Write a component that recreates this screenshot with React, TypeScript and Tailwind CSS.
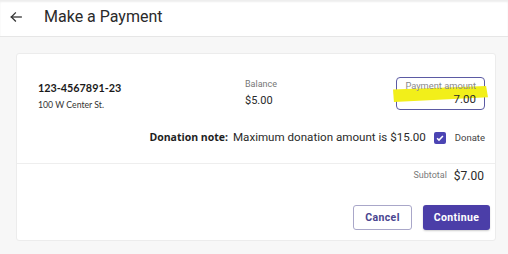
import React from "react";

export default function App() {
  return (
    <div className="w-[508px] h-[254px] overflow-hidden bg-[#f7f7f7] font-['Roboto',sans-serif]">
      <header className="h-[37px] bg-white border-b border-[#e6e6e6] shadow-[inset_0_2px_2px_rgba(0,0,0,0.07)] flex items-center pb-[3px]">
        <svg className="ml-[9px] w-[14px] h-[14px]" viewBox="0 0 24 24" fill="none" stroke="#333" strokeWidth="2.2" strokeLinecap="square">
          <path d="M21 12H4" />
          <path d="M11 5l-7 7 7 7" />
        </svg>
        <h1 className="ml-[21px] text-[16px] text-[#2a2a2a] leading-none">Make a Payment</h1>
      </header>
      <main className="pt-[16px] px-[16px]">
        <div className="w-[480px] h-[188px] bg-white border border-[#ececec] rounded-[3px] flex flex-col">
          <div className="h-[110px] pl-[21px] pr-[10px] pt-[23px] border-b border-[#eeeeee]">
            <div className="flex items-center h-[33px]">
              <div className="w-[207px] pt-[3px]">
                <div className="font-['Lato',sans-serif] font-bold text-[10.8px] text-[#1a1a1a] leading-[14px]">123-4567891-23</div>
                <div className="font-['Lato',sans-serif] text-[8.7px] text-[#333] leading-[11px] mt-[4px]">100 W Center St.</div>
              </div>
              <div className="flex-1 -mt-[1px]">
                <div className="text-[9px] text-[#777] leading-[11px]">Balance</div>
                <div className="text-[11px] text-[#2a2a2a] leading-[14px] mt-[4px]">$5.00</div>
              </div>
              <div className="relative w-[89px] h-[33px] rounded-[4px] border-[1.5px] border-[#5b5aa3] flex flex-col items-end pr-[8px] pt-[2px]">
                <div className="absolute left-[-4px] top-[8px] w-[95px] h-[16px] bg-[#f2ef1a] [clip-path:polygon(0_22%,98%_0,100%_70%,1%_100%)]" />
                <div className="relative text-[9.3px] text-[#8a8a8a] leading-[11px]">Payment amount</div>
                <div className="relative text-[11.5px] text-[#2a2a2a] leading-[13px] mt-[2px]">7.00</div>
              </div>
            </div>
            <div className="flex items-center justify-end mt-[20px] h-[16px]">
              <span className="font-['Open_Sans',sans-serif] font-bold text-[10.5px] text-[#1e1e1e]">Donation note:</span>
              <span className="ml-[5px] text-[11.6px] text-[#2a2a2a]">Maximum donation amount is $15.00</span>
              <span className="ml-[8px] w-[12px] h-[12px] rounded-[2px] bg-[#4b44b3] flex items-center justify-center">
                <svg viewBox="0 0 12 12" className="w-[10px] h-[10px]" fill="none" stroke="white" strokeWidth="1.8">
                  <path d="M2.5 6.2l2.3 2.3 4.7-5" />
                </svg>
              </span>
              <span className="ml-[9px] text-[9.5px] text-[#444]">Donate</span>
            </div>
          </div>
          <div className="flex-1 pr-[5px] flex flex-col">
            <div className="flex items-center justify-end pr-[6px] mt-[5px] h-[14px]">
              <span className="text-[9px] text-[#7a7a7a]">Subtotal</span>
              <span className="ml-[7px] text-[12px] text-[#2a2a2a]">$7.00</span>
            </div>
            <div className="flex justify-end gap-[11px] mt-[22px]">
              <button className="w-[59px] h-[25px] rounded-[3px] border border-[#a9a7c9] bg-white text-[10.5px] font-bold tracking-[0.4px] text-[#4a4590]">Cancel</button>
              <button className="w-[67px] h-[25px] rounded-[3px] bg-[#4b3ea8] text-[10.5px] font-bold tracking-[0.4px] text-white shadow-[0_1px_2px_rgba(0,0,0,0.2)]">Continue</button>
            </div>
          </div>
        </div>
      </main>
    </div>
  );
}
